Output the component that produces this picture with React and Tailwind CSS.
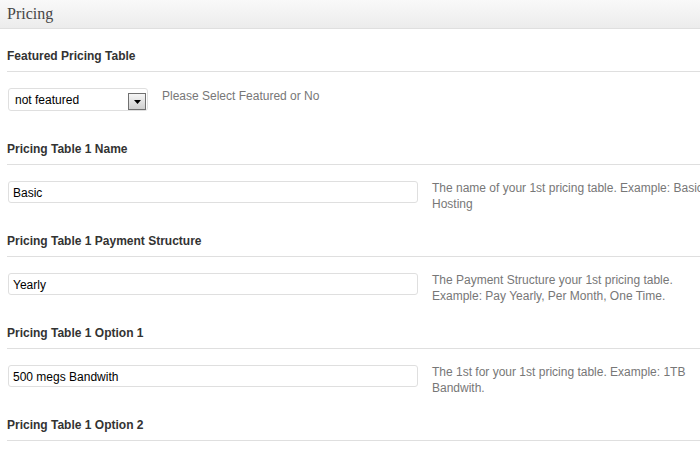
import React from "react";

const FIELDS = [
  {
    label: "Pricing Table 1 Name",
    value: "Basic",
    desc: "The name of your 1st pricing table. Example: Basic Hosting",
  },
  {
    label: "Pricing Table 1 Payment Structure",
    value: "Yearly",
    desc: "The Payment Structure your 1st pricing table. Example: Pay Yearly, Per Month, One Time.",
  },
  {
    label: "Pricing Table 1 Option 1",
    value: "500 megs Bandwith",
    desc: "The 1st for your 1st pricing table. Example: 1TB Bandwith.",
  },
];

function Title({ children }) {
  return (
    <div className="pt-[19px] pb-[7px] border-b border-[#dfdfdf] text-[12px] leading-4 font-bold text-[#333]">
      {children}
    </div>
  );
}

function SelectBox() {
  return (
    <div className="ml-px w-[140px] h-[23px] shrink-0 flex items-center justify-between border border-[#dfdfdf] rounded-[3px] bg-white pl-[6px] pr-[1px]">
      <span className="text-[12px] text-black">not featured</span>
      <div className="mt-[4px] w-[18px] h-[17px] border border-[#707070] bg-gradient-to-b from-[#f6f6f6] to-[#cfcfcf] flex items-center justify-center">
        <svg width="7" height="4" viewBox="0 0 7 4">
          <path d="M0 0h7L3.5 4z" fill="#000" />
        </svg>
      </div>
    </div>
  );
}

export default function App() {
  return (
    <div className="w-[700px] h-[450px] overflow-hidden bg-white font-['Liberation_Sans',Arial,sans-serif]">
      <div className="w-[760px]">
        <div className="h-[29px] border-b border-[#dfdfdf] bg-gradient-to-b from-[#f9f9f9] to-[#ececec] pl-[7px] flex items-center">
          <span className="font-['Liberation_Serif',Georgia,serif] text-[16px] text-[#464646]">
            Pricing
          </span>
        </div>

        <div className="pl-[7px]">
          <Title>Featured Pricing Table</Title>
          <div className="h-[50px] pt-4 flex items-start gap-[14px]">
            <SelectBox />
            <div className="text-[12px] leading-4 text-[#777]">
              Please Select Featured or No
            </div>
          </div>

          {FIELDS.map((f) => (
            <div key={f.label}>
              <Title>{f.label}</Title>
              <div className="h-[49px] pt-4 flex items-start gap-[14px]">
                <div className="ml-px w-[410px] h-[22px] shrink-0 border border-[#dfdfdf] rounded-[3px] bg-white px-[4px] pt-px flex items-center text-[12px] text-black">
                  {f.value}
                </div>
                <div className="-mt-[1px] w-[292px] text-[12px] leading-4 text-[#777]">
                  {f.desc}
                </div>
              </div>
            </div>
          ))}

          <Title>Pricing Table 1 Option 2</Title>
        </div>
      </div>
    </div>
  );
}
